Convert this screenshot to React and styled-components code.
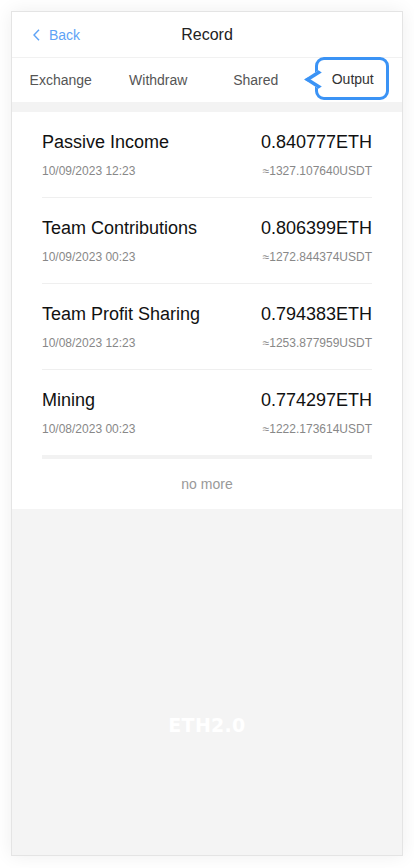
import React from "react";
import styled, { createGlobalStyle } from "styled-components";

const Global = createGlobalStyle`
  html, body { margin: 0; padding: 0; background: #fff; }
  body { font-family: "Liberation Sans", Arial, sans-serif; }
  * { box-sizing: border-box; }
`;

const Page = styled.div`
  padding: 11px 11px 12px;
`;

const Frame = styled.div`
  height: 845px;
  border: 1px solid #e4e4e4;
  background: #f4f4f4;
  box-shadow: 0 0 18px rgba(0, 0, 0, 0.07);
  display: flex;
  flex-direction: column;
`;

const Header = styled.header`
  height: 46px;
  background: #fff;
  border-bottom: 1px solid #f1f1f1;
  display: grid;
  grid-template-columns: 1fr auto 1fr;
  align-items: center;
`;

const BackLink = styled.a`
  display: flex;
  align-items: center;
  gap: 9px;
  padding-left: 21px;
  padding-top: 1px;
  color: #5ea3f6;
  font-size: 14px;
  text-decoration: none;
  cursor: pointer;
`;

const Title = styled.h1`
  margin: 0;
  font-size: 16px;
  font-weight: normal;
  color: #222;
`;

const Tabs = styled.nav`
  height: 44px;
  background: #fff;
  display: grid;
  grid-template-columns: repeat(4, 1fr);
`;

const Tab = styled.div`
  display: flex;
  justify-content: center;
  align-items: ${(p) => (p.$active ? "flex-start" : "center")};
  font-size: 14px;
  color: ${(p) => (p.$active ? "#333" : "#555")};
  cursor: pointer;
`;

const Bubble = styled.span`
  position: relative;
  width: 74px;
  height: 43px;
  margin-top: -1px;
  margin-left: -2px;
  border: 3px solid #3b93f5;
  border-radius: 9px;
  display: flex;
  align-items: center;
  justify-content: center;
  padding-left: 1px;
  background: #fff;

  &::before {
    content: "";
    position: absolute;
    left: -6.5px;
    top: 50%;
    width: 10px;
    height: 10px;
    margin-top: -6px;
    background: #fff;
    border-left: 3px solid #3b93f5;
    border-bottom: 3px solid #3b93f5;
    transform: scaleX(1.55) rotate(45deg);
  }
`;

const Gap = styled.div`
  height: 10px;
  background: #f3f3f3;
`;

const List = styled.section`
  background: #fff;
  padding: 0 30px;
`;

const Item = styled.div`
  padding: 19px 0 18px;
  border-bottom: ${(p) => (p.$last ? "4px solid #f2f2f2" : "1px solid #efefef")};
  display: grid;
  grid-template-columns: 1fr auto;
  row-gap: 10px;
`;

const Name = styled.div`
  font-size: 18px;
  line-height: 22px;
  color: #111;
`;

const Amount = styled.div`
  font-size: 18px;
  line-height: 22px;
  color: #111;
  text-align: right;
`;

const Sub = styled.div`
  font-size: 12px;
  line-height: 16px;
  color: #888;
  text-align: ${(p) => (p.$right ? "right" : "left")};
`;

const NoMore = styled.div`
  height: 50px;
  display: flex;
  align-items: center;
  justify-content: center;
  font-size: 14px;
  color: #999;
`;

const Footer = styled.div`
  flex: 1;
  display: flex;
  justify-content: center;
  padding-top: 205px;
`;

const Brand = styled.div`
  font-family: "DejaVu Sans", sans-serif;
  font-weight: bold;
  font-size: 19px;
  line-height: 22px;
  color: #fff;
  letter-spacing: 0.3px;
`;

const records = [
  { name: "Passive Income", time: "10/09/2023 12:23", eth: "0.840777ETH", usdt: "≈1327.107640USDT" },
  { name: "Team Contributions", time: "10/09/2023 00:23", eth: "0.806399ETH", usdt: "≈1272.844374USDT" },
  { name: "Team Profit Sharing", time: "10/08/2023 12:23", eth: "0.794383ETH", usdt: "≈1253.877959USDT" },
  { name: "Mining", time: "10/08/2023 00:23", eth: "0.774297ETH", usdt: "≈1222.173614USDT" },
];

const tabs = ["Exchange", "Withdraw", "Shared", "Output"];

export default function App() {
  return (
    <Page>
      <Global />
      <Frame>
        <Header>
          <BackLink>
            <svg width="7" height="12" viewBox="0 0 7 12" fill="none">
              <path d="M6 0.8 L1 6 L6 11.2" stroke="#5ea3f6" strokeWidth="1.4" />
            </svg>
            Back
          </BackLink>
          <Title>Record</Title>
          <span />
        </Header>
        <Tabs>
          {tabs.map((t) =>
            t === "Output" ? (
              <Tab key={t} $active>
                <Bubble>{t}</Bubble>
              </Tab>
            ) : (
              <Tab key={t}>{t}</Tab>
            )
          )}
        </Tabs>
        <Gap />
        <List>
          {records.map((r, i) => (
            <Item key={r.name} $last={i === records.length - 1}>
              <Name>{r.name}</Name>
              <Amount>{r.eth}</Amount>
              <Sub>{r.time}</Sub>
              <Sub $right>{r.usdt}</Sub>
            </Item>
          ))}
          <NoMore>no more</NoMore>
        </List>
        <Footer>
          <Brand>ETH2.0</Brand>
        </Footer>
      </Frame>
    </Page>
  );
}
